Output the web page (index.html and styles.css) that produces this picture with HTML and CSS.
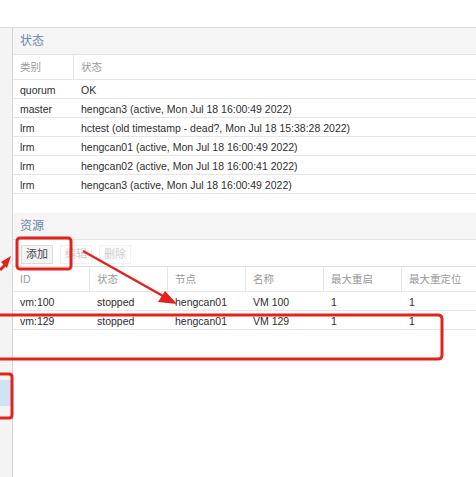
FILE: index.html
```html
<!DOCTYPE html>
<html>
<head>
<meta charset="utf-8">
<link rel="stylesheet" href="styles.css">
</head>
<body>
<div class="page">
  <div class="top"></div>
  <div class="main">
    <div class="sidebar">
      <div class="side-sel"></div>
    </div>
    <div class="content">
      <div class="panel-title">状态</div>
      <div class="grid status">
        <div class="hrow"><div class="c c1">类别</div><div class="c">状态</div></div>
        <div class="row"><div class="c c1">quorum</div><div class="c">OK</div></div>
        <div class="row"><div class="c c1">master</div><div class="c">hengcan3 (active, Mon Jul 18 16:00:49 2022)</div></div>
        <div class="row"><div class="c c1">lrm</div><div class="c">hctest (old timestamp - dead?, Mon Jul 18 15:38:28 2022)</div></div>
        <div class="row"><div class="c c1">lrm</div><div class="c">hengcan01 (active, Mon Jul 18 16:00:49 2022)</div></div>
        <div class="row"><div class="c c1">lrm</div><div class="c">hengcan02 (active, Mon Jul 18 16:00:41 2022)</div></div>
        <div class="row"><div class="c c1">lrm</div><div class="c">hengcan3 (active, Mon Jul 18 16:00:49 2022)</div></div>
      </div>
      <div class="gap"></div>
      <div class="panel-title">资源</div>
      <div class="toolbar">
        <span class="btn">添加</span>
        <span class="btn dis">编辑</span>
        <span class="btn dis">删除</span>
      </div>
      <div class="grid res">
        <div class="hrow"><div class="c">ID</div><div class="c">状态</div><div class="c">节点</div><div class="c">名称</div><div class="c">最大重启</div><div class="c">最大重定位</div></div>
        <div class="row"><div class="c">vm:100</div><div class="c">stopped</div><div class="c">hengcan01</div><div class="c">VM 100</div><div class="c">1</div><div class="c">1</div></div>
        <div class="row"><div class="c">vm:129</div><div class="c">stopped</div><div class="c">hengcan01</div><div class="c">VM 129</div><div class="c">1</div><div class="c">1</div></div>
      </div>
    </div>
  </div>
  <svg class="annot" width="476" height="477" viewBox="0 0 476 477">
    <rect x="17" y="238" width="54" height="31" rx="3" fill="none" stroke="#e3231b" stroke-width="3"/>
    <line x1="83" y1="251" x2="163" y2="296" stroke="#e3231b" stroke-width="2.5"/>
    <polygon points="177,304 158,302 165,291" fill="#e3231b"/>
    <line x1="0" y1="270" x2="6" y2="264" stroke="#e3231b" stroke-width="3"/>
    <polygon points="11,256 1,262 7,268" fill="#e3231b"/>
    <path d="M-5 315 H438 Q442 315 442 319 V355 Q442 359 438 359 H-5" fill="none" stroke="#e3231b" stroke-width="3"/>
    <path d="M-5 374 H9 Q12 374 12 377 V415 Q12 418 9 418 H-5" fill="none" stroke="#e3231b" stroke-width="3"/>
  </svg>
</div>
</body>
</html>
```

FILE: styles.css
```css
html, body {
  margin: 0;
  padding: 0;
  background: #fff;
}
.page {
  position: relative;
  width: 476px;
  height: 477px;
  overflow: hidden;
  font-family: "Liberation Sans", Arial, "Noto Sans CJK SC", sans-serif;
  font-size: 10.5px;
  color: #2e2e2e;
}
.top {
  height: 27px;
  border-bottom: 1px solid #dcdcdc;
}
.main {
  display: flex;
  height: 449px;
}
.sidebar {
  width: 12px;
  background: #f4f4f4;
  border-right: 1px solid #d4d4d4;
  padding-top: 352px;
  box-sizing: content-box;
}
.side-sel {
  height: 26px;
  background: #cfe3f3;
}
.content {
  flex: 1;
  min-width: 0;
}
.panel-title {
  height: 26px;
  line-height: 27px;
  padding-left: 7px;
  background: #f5f5f5;
  border-bottom: 1px solid #e2e2e2;
  color: #6a88a8;
  font-size: 12px;
}
.hrow, .row {
  display: flex;
  border-bottom: 1px solid #e6e6e6;
}
.hrow {
  height: 24px;
  line-height: 25px;
  color: #9a9a9a;
}
.row {
  height: 18px;
  line-height: 20px;
}
.c {
  padding-left: 7px;
  white-space: nowrap;
  box-sizing: border-box;
}
.status .c1 {
  width: 61px;
  flex: none;
}
.status .hrow .c1 {
  border-right: 1px solid #e6e6e6;
}
.gap {
  height: 19px;
}
.toolbar {
  height: 27px;
  display: flex;
  align-items: center;
  gap: 7px;
  padding-left: 8px;
  padding-top: 2px;
  box-sizing: border-box;
  border-bottom: 1px solid #e2e2e2;
}
.btn {
  display: inline-block;
  padding: 2px 4px;
  border: 1px solid #dcdcdc;
  background: #f4f4f4;
  color: #444;
  font-size: 11px;
  line-height: 13px;
}
.btn.dis {
  color: #cfcfcf;
  background: #fdfdfd;
  border-color: #f2f2f2;
}
.res .c {
  width: 78px;
  flex: none;
}
.res .c:first-child {
  width: 77px;
}
.res .hrow .c {
  border-right: 1px solid #e6e6e6;
}
.annot {
  position: absolute;
  left: 0;
  top: 0;
}
```
